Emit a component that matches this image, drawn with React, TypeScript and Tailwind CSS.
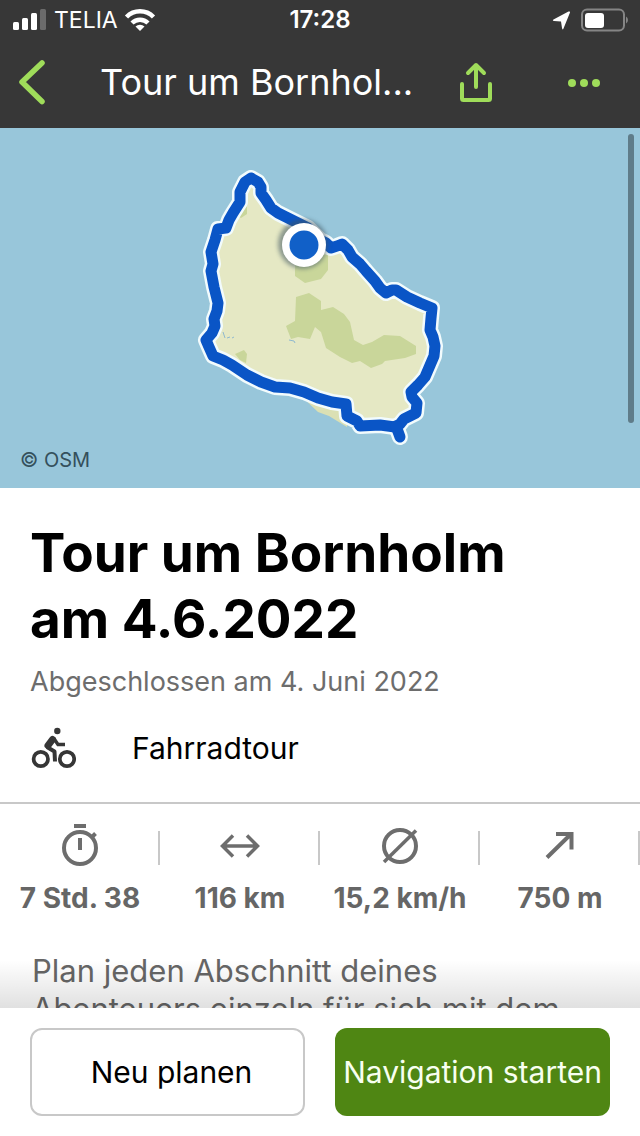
import type { ReactNode } from 'react';

const COAST =
  '251,178 258,182 261,187 261,193 266,200 271,208 278,213 290,219 298,223 308,228 320,240 326,243 331,248 337,246 342,244 348,250 352,257 360,264 366,271 375,281 380,288 386,293 392,290 396,290 407,297 420,303 432,308 431,318 430,330 433,337 435,346 434,356 431,363 428,370 425,377 418,385 411,392 412,397 417,403 416,413 408,417 404,419 400,424 395,427 380,425 360,426 357,421 347,416 346,404 332,402 318,398 304,392 290,388 275,387 261,382 247,375 232,365 223,360 213,356 209,347 206,340 212,333 215,326 214,319 217,311 218,303 214,287 211,271 213,264 211,252 215,240 218,229 226,228 229,220 233,213 240,202 240,192 245,182 251,178';
const SPUR = '396,426 400,437';

function RouteMap() {
  return (
    <svg
      className="block aspect-[16/9] w-full"
      viewBox="0 128 640 360"
      role="img"
      aria-label="Route um Bornholm"
    >
      <defs>
        <filter id="marker-shadow" x="-30%" y="-30%" width="160%" height="160%">
          <feGaussianBlur stdDeviation="2" />
        </filter>
      </defs>
      <rect y="128" width="640" height="360" fill="#98c6da" />
      <polygon points="300,395 318,412 329,416 347,427 350,404" fill="#dbe0b4" />
      <polygon points={COAST} fill="#e5e8c4" />
      <g fill="#c9d69a">
        <polygon points="238,212 247,206 247,214 241,218 237,216" />
        <polygon points="295,262 328,254 328,270 321,279 305,283 295,276" />
        <polygon points="296,297 309,293 321,301 321,310 333,307 344,314 350,322 354,340 363,345 372,342 384,335 400,336 416,346 416,354 405,358 385,361 382,364 371,368 360,361 352,363 340,357 326,348 321,332 315,327 310,339 298,337 291,339 286,326 295,321" />
        <polygon points="235,354 244,350 247,354 246,363 240,360" />
      </g>
      <g fill="none" stroke="#8fb9cf" strokeWidth="1">
        <path d="M223 332l2 6M227 338l3-1M232 338l2-1M289 340l5 1 1 2" />
      </g>
      <g fill="none" stroke="#f2fbfd" strokeWidth="16" strokeLinejoin="round" strokeLinecap="round">
        <polyline points={COAST} />
        <polyline points={SPUR} />
      </g>
      <g fill="none" stroke="#0a55c6" strokeWidth="11" strokeLinejoin="round" strokeLinecap="round">
        <polyline points={COAST} />
        <polyline points={SPUR} />
      </g>
      <circle cx="303" cy="244" r="25" fill="#3f5560" opacity="0.55" filter="url(#marker-shadow)" />
      <circle cx="304" cy="245" r="22" fill="#fff" />
      <circle cx="304" cy="245" r="14.5" fill="#1160c8" />
    </svg>
  );
}

function Icon({ children, label }: { children: ReactNode; label: string }) {
  return (
    <svg
      className="size-11"
      viewBox="0 0 44 44"
      fill="none"
      stroke="#6d6d6d"
      strokeWidth="4"
      role="img"
      aria-label={label}
    >
      {children}
    </svg>
  );
}

const stats = [
  {
    label: 'Dauer',
    value: '7 Std. 38',
    icon: (
      <>
        <circle cx="22" cy="24" r="16" />
        <path d="M16 2h12M22 14v12M33 14l4.500-4.500" />
      </>
    ),
  },
  {
    label: 'Distanz',
    value: '116 km',
    icon: <path strokeWidth="3.500" d="M4 22h36M15 11.500L4.500 22 15 32.500M29 11.500L39.500 22 29 32.500" />,
  },
  {
    label: 'Durchschnitt',
    value: '15,2 km/h',
    icon: (
      <>
        <circle cx="22" cy="22" r="16" />
        <path strokeWidth="3.500" d="M6 38L38 6.500" />
      </>
    ),
  },
  {
    label: 'Aufstieg',
    value: '750 m',
    icon: <path d="M9 33.500L33 10M18 10h15.500v15.500" />,
  },
];

function StatusBar() {
  return (
    <div className="grid h-10 grid-cols-3 items-center px-3 text-white">
      <div className="flex items-center gap-1.5">
        <svg className="h-6 w-9" viewBox="0 0 36 24" fill="#fff" aria-label="Signal">
          <rect x="1" y="14" width="6" height="8" rx="1.500" />
          <rect x="10" y="10" width="6" height="12" rx="1.500" />
          <rect x="19" y="5" width="6" height="17" rx="1.500" />
          <rect x="28" y="1" width="6" height="21" rx="1.500" fill="#6b6b6b" />
        </svg>
        <span className="text-[23px] leading-7">TELIA</span>
        <svg className="h-6 w-8" viewBox="0 0 32 24" fill="none" stroke="#fff" strokeWidth="4.500" aria-label="WLAN">
          <path d="M2.500 9A19 19 0 0 1 29.500 9M8 15A11.500 11.500 0 0 1 24 15" />
          <path d="M16 23l-4.500-4.500a6.500 6.500 0 0 1 9 0z" fill="#fff" stroke="none" />
        </svg>
      </div>
      <span className="text-center text-[24px] leading-7 font-semibold">17:28</span>
      <div className="flex items-center justify-end gap-2">
        <svg className="size-6" viewBox="0 0 24 24" fill="#fff" aria-label="Standort">
          <path d="M22 4.500L15.500 20.500q-1 2-1.500-.5L13 13.500 6 13q-2-.5-.5-1.500L20.500 3.500q2-.5 1.500 1z" />
        </svg>
        <svg className="h-6 w-12" viewBox="0 0 48 24" fill="none" aria-label="Akku">
          <rect x="2" y="1.500" width="42" height="21" rx="5" stroke="#858585" strokeWidth="2" />
          <rect x="5" y="5" width="19" height="15" rx="3" fill="#fff" />
          <path d="M46 8.500q2 1 2 3.500t-2 3.500z" fill="#858585" />
        </svg>
      </div>
    </div>
  );
}

export default function App() {
  return (
    <div className="flex h-screen flex-col overflow-hidden bg-white font-['Inter','Liberation_Sans',sans-serif] text-black">
      <header className="shrink-0 bg-[#373737]">
        <StatusBar />
        <nav className="flex h-[88px] items-center px-4 pb-1 text-white">
          <button type="button" aria-label="Zurück" className="w-[84px] shrink-0">
            <svg className="h-12 w-8" viewBox="0 0 32 48" fill="none" stroke="#9fdc5a" strokeWidth="5.500" strokeLinecap="round" strokeLinejoin="round">
              <path d="M26 5L6 24 26 43.500" />
            </svg>
          </button>
          <div className="min-w-0 flex-1 text-[36px] leading-[44px]">Tour um Bornhol...</div>
          <button type="button" aria-label="Teilen" className="mr-[66px] shrink-0">
            <svg className="size-11" viewBox="0 0 44 44" fill="none" stroke="#9fdc5a" strokeWidth="4" strokeLinecap="round" strokeLinejoin="round">
              <path d="M8 24v14.500q0 1.500 1.500 1.500h25q1.500 0 1.500-1.500V24M22 27V5M14 13l8-8 8 8" />
            </svg>
          </button>
          <button type="button" aria-label="Mehr" className="mr-5 shrink-0">
            <svg className="h-11 w-10" viewBox="0 0 40 44" fill="#9fdc5a">
              <circle cx="8" cy="23" r="4" />
              <circle cx="20" cy="23" r="4" />
              <circle cx="32" cy="23" r="4" />
            </svg>
          </button>
        </nav>
      </header>

      <main className="relative min-h-0 flex-1 overflow-hidden">
        <div className="relative">
          <RouteMap />
          <span className="absolute bottom-3 left-5 text-[20px] leading-8 text-[#34505c]">© OSM</span>
        </div>
        <span className="absolute top-1.5 right-1.5 h-[289px] w-1.5 rounded-full bg-[#5f7c89]" />

        <section className="px-[30px] pt-8 pb-[30px]">
          <h1 className="max-w-[520px] text-[53px] leading-[66px] font-bold">
            Tour um Bornholm am 4.6.2022
          </h1>
          <p className="mt-3 text-[27px] leading-9 text-[#6d6d6d]">Abgeschlossen am 4. Juni 2022</p>
          <div className="mt-6 flex items-center gap-14">
            <svg className="h-12 w-[46px]" viewBox="0 0 46 48" fill="none" stroke="#363636" aria-hidden="true">
              <circle cx="10.800" cy="35" r="7.200" strokeWidth="3.700" />
              <circle cx="37" cy="35" r="7.200" strokeWidth="3.700" />
              <circle cx="27.300" cy="7" r="3.200" fill="#363636" stroke="none" />
              <path d="M22.500 15.500L18 21.500" strokeWidth="7" strokeLinejoin="round" strokeLinecap="round" />
              <path d="M23.500 14l4.500 6.500h7" strokeWidth="3.400" />
              <path d="M17 23l7.500 4.500 .5 10" strokeWidth="4" strokeLinejoin="round" />
            </svg>
            <span className="text-[30px] leading-9">Fahrradtour</span>
          </div>
        </section>

        <dl className="grid grid-cols-4 border-t-2 border-[#c8c8c8] pt-5">
          {stats.map((stat) => (
            <div key={stat.label} className="text-center text-[#666]">
              <dt className="flex h-11 items-center justify-center">
                <span className="flex-1" />
                <Icon label={stat.label}>{stat.icon}</Icon>
                <span className="flex h-11 flex-1 items-center justify-end pt-1">
                  <span className="h-[34px] w-0.5 bg-[#c8c8c8]" />
                </span>
              </dt>
              <dd className="mt-3 text-[28px] leading-9 font-bold whitespace-nowrap">{stat.value}</dd>
            </div>
          ))}
        </dl>

        <p className="mt-9 max-w-[600px] px-8 text-[31px] leading-[38px] text-[#666]">
          Plan jeden Abschnitt deines Abenteuers einzeln für sich mit dem
        </p>
        <div className="absolute inset-x-0 bottom-0 h-12 bg-linear-to-b from-transparent to-black/12" />
      </main>

      <footer className="grid shrink-0 grid-cols-2 gap-[30px] bg-white px-[30px] py-5 text-[30px] leading-9">
        <button type="button" className="h-[88px] rounded-xl border-2 border-[#c8c8c8] pl-2 whitespace-nowrap">
          Neu planen
        </button>
        <button type="button" className="h-[88px] rounded-xl bg-[#4f8613] whitespace-nowrap text-[#f8fff0]">
          Navigation starten
        </button>
      </footer>
    </div>
  );
}
